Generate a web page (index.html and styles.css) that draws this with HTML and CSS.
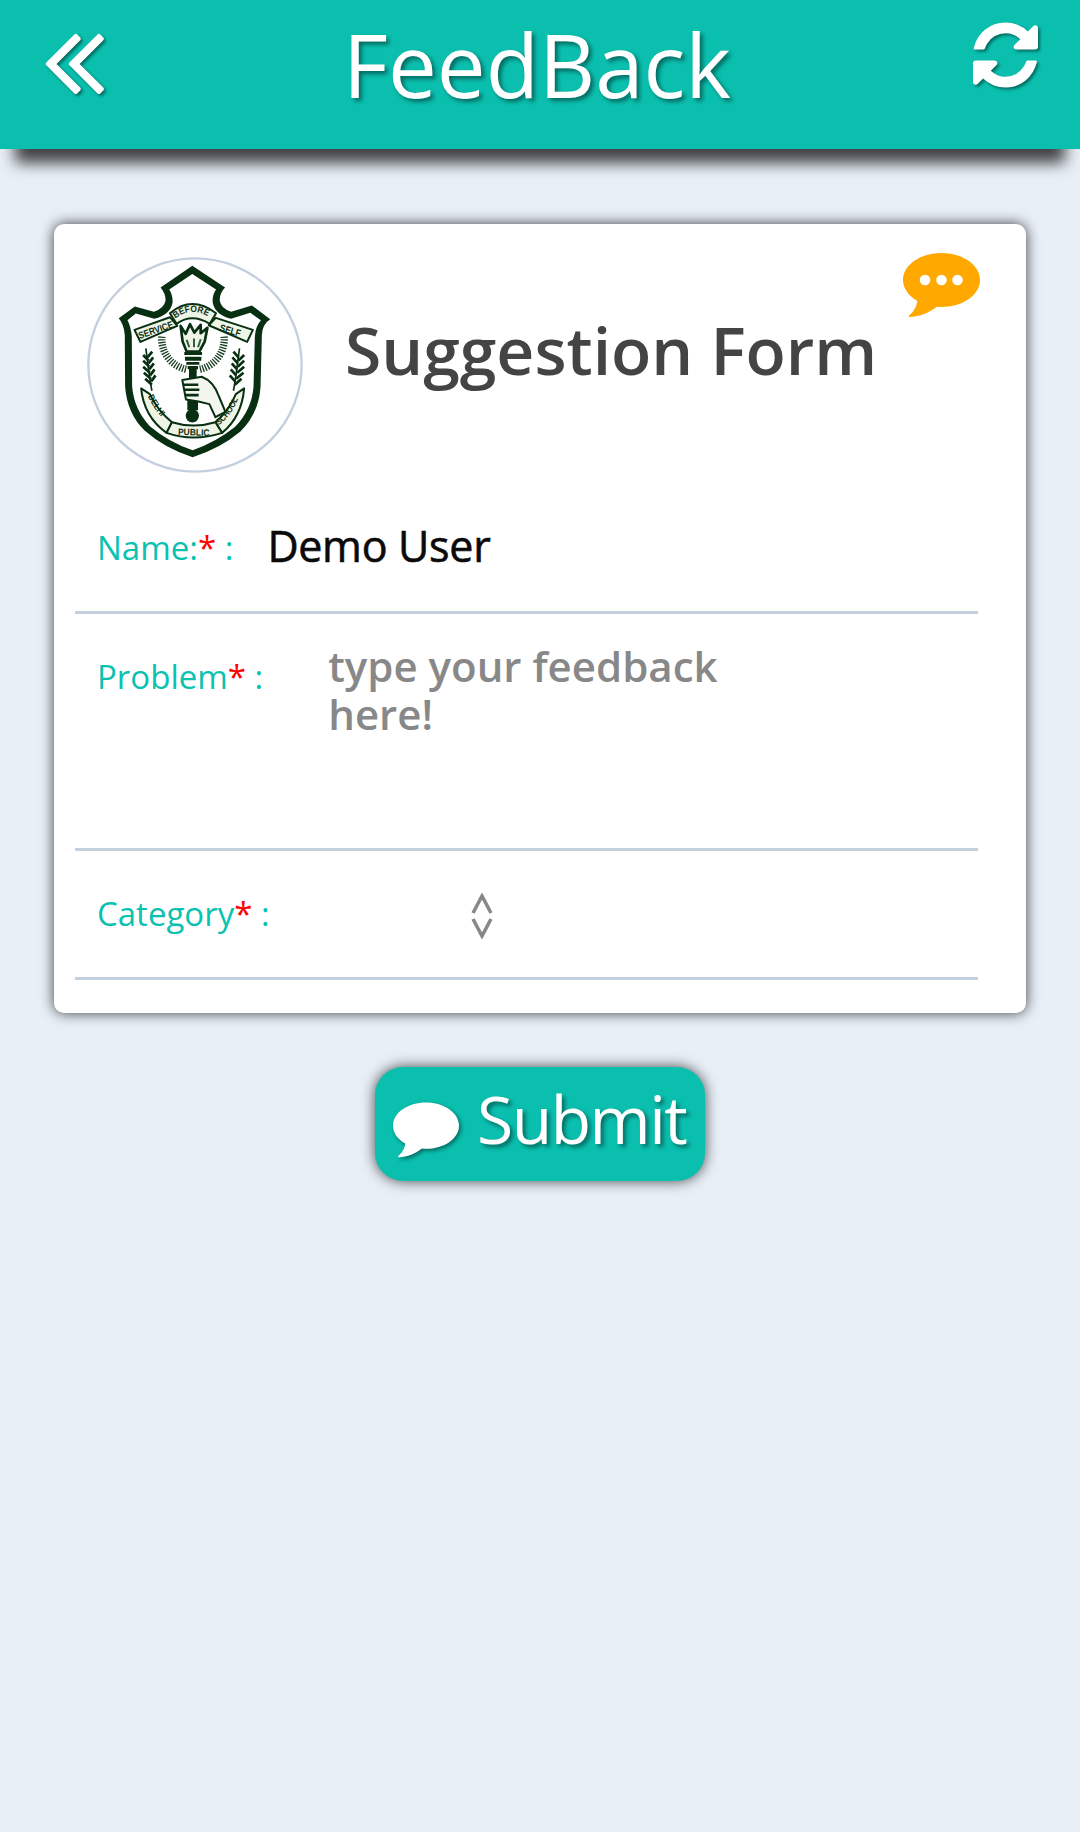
FILE: index.html
```html
<!DOCTYPE html>
<html lang="en">
<head>
<meta charset="utf-8">
<title>FeedBack</title>
<link rel="stylesheet" href="styles.css">
</head>
<body>
<header class="topbar">
  <svg class="icon-back" viewBox="419 447 976 1012"><path d="M1011 1376q0 13-10 23l-50 50q-10 10-23 10t-23-10l-466-466q-10-10-10-23t10-23l466-466q10-10 23-10t23 10l50 50q10 10 10 23t-10 23l-393 393 393 393q10 10 10 23zm384 0q0 13-10 23l-50 50q-10 10-23 10t-23-10l-466-466q-10-10-10-23t10-23l466-466q10-10 23-10t23 10l50 50q10 10 10 23t-10 23l-393 393 393 393q10 10 10 23z"/></svg>
  <h1 class="title">FeedBack</h1>
  <svg class="icon-refresh" viewBox="128 128 1536 1536"><path d="M1639 1056q0 5-1 7-64 268-268 434.500t-478 166.500q-146 0-282.500-55t-243.500-157l-129 129q-19 19-45 19t-45-19-19-45v-448q0-26 19-45t45-19h448q26 0 45 19t19 45-19 45l-137 137q71 66 161 102t187 36q134 0 250-65t186-179q11-17 53-117 8-23 30-23h192q13 0 22.500 9.500t9.500 22.500zm25-800v448q0 26-19 45t-45 19h-448q-26 0-45-19t-19-45 19-45l138-138q-148-137-349-137-134 0-250 65t-186 179q-11 17-53 117-8 23-30 23h-199q-13 0-22.500-9.500t-9.500-22.500v-7q65-268 270-434.500t480-166.500q146 0 284 55.500t245 156.500l130-129q19-19 45-19t45 19 19 45z"/></svg>
</header>

<main class="content">
  <section class="card">
    <svg class="card-bubble" viewBox="0 0 77 64">
      <path class="bubble-orange" d="M38.500 0C17.500 0 0 11.800 0 27c0 8.600 5.800 16 14.300 20.800C13.700 53.500 10.500 59 6.200 62.400c-.9.800-.3 1.600.7 1.500 9.800-.4 19.300-4.200 26.900-10.200 1.600.2 3.100.3 4.700.3C59.600 54 77 42 77 27S59.600 0 38.500 0z"/>
      <circle class="bubble-dot" cx="22" cy="27" r="5.300"/>
      <circle class="bubble-dot" cx="38.500" cy="27" r="5.300"/>
      <circle class="bubble-dot" cx="54.500" cy="27" r="5.300"/>
    </svg>
    <div class="card-head">
      <svg class="logo" viewBox="52 52 646 646">
        <defs>
          <path id="arc-before" d="M316 236Q366 196 424 236"/>
          <path id="arc-delhi" d="M234 468Q258 522 304 558"/>
          <path id="arc-school" d="M446 556Q492 520 510 456"/>
        </defs>
        <circle class="logo-ring" cx="375" cy="375" r="319"/>
        <path class="logo-dark" d="M367 78L465 143Q448 160 449 182Q452 205 483 216L545 197L600 238Q577 252 575 285L571 440Q566 520 510 575Q450 625 368 651Q285 625 225 572Q172 520 166 440L165 285Q162 252 147 235L195 200L252 216Q283 205 287 182Q287 160 272 143Z"/>
        <path class="logo-white" d="M367 103L438 149Q426 166 428 188Q434 224 483 237L540 219L572 241Q556 260 554 290L550 440Q545 508 495 560Q438 606 368 630Q297 606 240 558Q193 508 187 440L186 290Q183 258 173 241L198 221L253 237Q302 224 308 188Q309 166 298 149Z"/>
        <!-- rays -->
        <path class="logo-rays" d="M276 290A92 92 0 0 0 350 388M462 290A92 92 0 0 1 388 388"/>
        <!-- laurels -->
        <g class="logo-laurel">
          <path d="M228 325C234 370 238 410 246 452"/>
          <path class="logo-leaf" d="M220 345L236 362M220 362L238 380M220 380L240 398M222 398L243 416M226 416L246 434M247 335L233 352M250 352L236 370M252 370L238 388M254 388L241 406M257 406L244 424"/>
          <path d="M508 325C502 370 498 410 490 452"/>
          <path class="logo-leaf" d="M522 345L505 362M522 362L503 380M522 380L501 398M520 398L498 416M514 416L494 434M490 335L505 352M487 352L503 370M485 370L501 388M482 388L498 406M479 406L495 424"/>
        </g>
        <!-- torch -->
        <path class="logo-flame" d="M332 258L347 282L360 253L373 278L392 255L392 280L412 264L404 305L388 335H350L338 305Z"/>
        <path class="logo-flick" d="M350 300L358 322M372 296V322M392 298L384 322"/>
        <path class="logo-dark" d="M343 336H396V345H343ZM345 350H394V362H345ZM349 366H388V374H349ZM353 378H384V388H353ZM357 388H380V430H357ZM352 470H384V510H352Z"/>
        <circle class="logo-dark" cx="367" cy="527" r="20"/>
        <!-- hand -->
        <path class="logo-hand" d="M337 420L395 410Q432 424 447 470L466 515L436 531L418 492L385 484L348 478Z"/>
        <path class="logo-handline" d="M340 434H385M342 449H388M346 465H386"/>
        <!-- banners -->
        <path class="logo-band" d="M194 270L300 232L322 258L212 306Z"/>
        <path class="logo-band" d="M416 256L437 234L548 270L531 306Z"/>
        <path class="logo-band" d="M300 220Q366 165 438 220L419 252Q366 218 320 252Z"/>
        <path class="logo-band" d="M214 445L240 462Q262 510 306 546L290 578Q222 530 214 445Z"/>
        <path class="logo-band" d="M522 445L497 462Q478 510 436 546L456 578Q515 530 522 445Z"/>
        <path class="logo-band" d="M306 546Q370 566 436 546L456 578Q370 606 290 578Z"/>
        <text class="logo-text" transform="translate(210 297) rotate(-19)" font-size="29" textLength="108" lengthAdjust="spacingAndGlyphs">SERVICE</text>
        <text class="logo-text" font-size="27"><textPath href="#arc-before" textLength="104" lengthAdjust="spacingAndGlyphs">BEFORE</textPath></text>
        <text class="logo-text" transform="translate(447 272) rotate(17)" font-size="29" textLength="64" lengthAdjust="spacingAndGlyphs">SELF</text>
        <text class="logo-text" font-size="26"><textPath href="#arc-delhi" textLength="74" lengthAdjust="spacingAndGlyphs">DELHI</textPath></text>
        <text class="logo-text" transform="translate(324 584) rotate(2)" font-size="28" textLength="94" lengthAdjust="spacingAndGlyphs">PUBLIC</text>
        <text class="logo-text" font-size="26"><textPath href="#arc-school" textLength="100" lengthAdjust="spacingAndGlyphs">SCHOOL</textPath></text>
      </svg>
      <h2 class="form-title">Suggestion Form</h2>
    </div>
    <div class="row row-name">
      <span class="label">Name:<span class="req">*</span> :</span>
      <span class="value">Demo User</span>
    </div>
    <div class="row row-problem">
      <span class="label">Problem<span class="req">*</span> :</span>
      <span class="placeholder">type your feedback<br>here!</span>
    </div>
    <div class="row row-category">
      <span class="label">Category<span class="req">*</span> :</span>
      <svg class="select-arrows" viewBox="0 0 22 46"><path d="M2 20L11 3L20 20M2 26L11 43L20 26"/></svg>
    </div>
  </section>

  <button class="submit" type="button">
    <svg class="submit-bubble" viewBox="0 0 77 64"><path d="M38.500 0C17.500 0 0 11.800 0 27c0 8.600 5.800 16 14.300 20.800C13.700 53.500 10.500 59 6.200 62.400c-.9.800-.3 1.600.7 1.500 9.800-.4 19.300-4.200 26.900-10.200 1.600.2 3.100.3 4.700.3C59.600 54 77 42 77 27S59.600 0 38.500 0z"/></svg>
    <span>Submit</span>
  </button>
</main>
</body>
</html>
```

FILE: styles.css
```css
* { box-sizing: border-box; }
html, body { margin: 0; padding: 0; }
body {
  width: 1080px;
  height: 1832px;
  overflow: hidden;
  background: #e8eff7;
  font-family: "Open Sans", "Noto Sans", sans-serif;
}
.topbar {
  height: 149px;
  background: #0abfae;
  display: flex;
  align-items: flex-start;
  justify-content: space-between;
  padding: 0 42px 0 45px;
  box-shadow: 0 29px 14px -15px rgba(0,0,0,.72);
  position: relative;
}
.icon-back { width: 59px; height: 61px; margin-top: 33px; fill: #fff; filter: drop-shadow(2px 2px 1.500px rgba(0,0,0,.45)); }
.icon-refresh { width: 65px; height: 66px; margin-top: 22px; fill: #fff; filter: drop-shadow(2px 2px 1.500px rgba(0,0,0,.45)); }
.title {
  margin: 0 3px 0 0;
  font-size: 87px;
  font-weight: 400;
  line-height: 128px;
  color: #fff;
  text-shadow: 3px 3px 4px rgba(0,0,0,.45);
}
.content {
  display: flex;
  flex-direction: column;
  align-items: center;
  padding-top: 75px;
}
.card {
  width: 972px;
  height: 789px;
  background: #fff;
  border-radius: 10px;
  padding: 33px 48px 0 21px;
  box-shadow: 0 0 14px rgba(0,0,0,.75);
  position: relative;
}
.card-bubble { position: absolute; left: 849px; top: 29px; width: 77px; height: 64px; }
.bubble-orange { fill: #ffa800; }
.bubble-dot { fill: #fff; }
.card-head { display: flex; align-items: flex-start; padding-left: 12px; height: 216px; }
.logo { width: 216px; height: 216px; flex: none; }
.logo-ring { fill: #fff; stroke: #c5d0de; stroke-width: 7; }
.logo-dark { fill: #082f12; }
.logo-white { fill: #fff; }
.logo-laurel { fill: none; stroke: #082f12; stroke-width: 5; }
.logo-leaf { stroke-width: 8; }
.logo-rays { fill: none; stroke: #183f22; stroke-width: 22; stroke-dasharray: 4 4; }
.logo-flame { fill: #eef4e6; stroke: #082f12; stroke-width: 8; stroke-linejoin: round; }
.logo-flick { fill: none; stroke: #335c3c; stroke-width: 6; }
.logo-hand { fill: #f2f6ee; stroke: #082f12; stroke-width: 6; stroke-linejoin: round; }
.logo-handline { fill: none; stroke: #082f12; stroke-width: 8; }
.logo-band { fill: #eef4e6; stroke: #082f12; stroke-width: 6; stroke-linejoin: round; }
.logo-text { font-family: "Liberation Sans", sans-serif; font-weight: 700; fill: #082f12; }
.form-title {
  margin: 47px 0 0 42px;
  font-size: 66px;
  font-weight: 600;
  line-height: 90px;
  color: #444;
  white-space: nowrap;
}
.row {
  display: flex;
  align-items: flex-start;
  border-bottom: 3px solid #c5d0de;
  padding-left: 22px;
}
.row-name { height: 141px; padding-top: 52px; }
.row-problem { height: 237px; padding-top: 40px; }
.row-category { height: 129px; padding-top: 40px; }
.label { font-size: 33px; line-height: 45px; color: #0bc1b0; white-space: nowrap; }
.req { color: #f00; }
.value {
  font-size: 43px;
  line-height: 58px;
  font-weight: 500;
  color: #0a0a0a;
  margin: -8px 0 0 34px;
  -webkit-text-stroke: 0.6px #0a0a0a;
  letter-spacing: -.3px;
}
.placeholder { font-size: 42px; line-height: 48px; font-weight: 600; color: #888; margin: -12px 0 0 65px; }
.select-arrows { width: 22px; height: 46px; margin: 2px 0 0 201px; fill: none; stroke: #888; stroke-width: 3.500; }
.submit {
  margin-top: 54px;
  width: 330px;
  height: 114px;
  border: 0;
  border-radius: 28px;
  background: #0abfae;
  color: #fff;
  display: flex;
  align-items: center;
  gap: 18px;
  padding: 0 0 0 18px;
  font-family: inherit;
  font-size: 66px;
  letter-spacing: -1.500px;
  text-shadow: 3px 3px 4px rgba(0,0,0,.45);
  box-shadow: 0 0 14px rgba(0,0,0,.7);
}
.submit span { line-height: 90px; margin-top: -12px; }
.submit-bubble { width: 66px; height: 56px; fill: #fff; margin-top: 12px; filter: drop-shadow(2px 2px 2px rgba(0,0,0,.45)); }
```
